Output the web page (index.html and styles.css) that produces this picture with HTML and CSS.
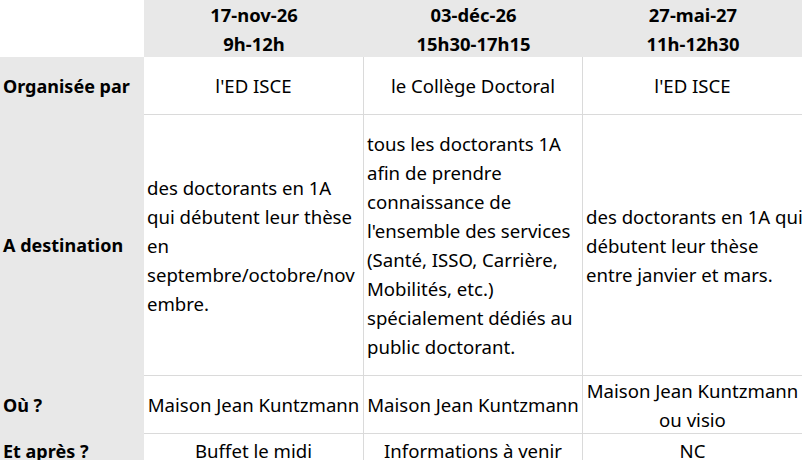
FILE: index.html
```html
<!DOCTYPE html>
<html lang="fr">
<head>
<meta charset="utf-8">
<title>Sessions</title>
<link rel="stylesheet" href="styles.css">
</head>
<body>
<div class="sheet">
  <div class="corner"></div>
  <div class="head">17-nov-26<br>9h-12h</div>
  <div class="head">03-déc-26<br>15h30-17h15</div>
  <div class="head">27-mai-27<br>11h-12h30</div>

  <div class="label">Organisée par</div>
  <div class="cell center">l'ED ISCE</div>
  <div class="cell center">le Collège Doctoral</div>
  <div class="cell center">l'ED ISCE</div>

  <div class="label">A destination</div>
  <div class="cell left">des doctorants en 1A<br>qui débutent leur thèse<br>en<br>septembre/octobre/nov<br>embre.</div>
  <div class="cell left">tous les doctorants 1A<br>afin de prendre<br>connaissance de<br>l'ensemble des services<br>(Santé, ISSO, Carrière,<br>Mobilités, etc.)<br>spécialement dédiés au<br>public doctorant.</div>
  <div class="cell left">des doctorants en 1A qui<br>débutent leur thèse<br>entre janvier et mars.</div>

  <div class="label">Où ?</div>
  <div class="cell center">Maison Jean Kuntzmann</div>
  <div class="cell center">Maison Jean Kuntzmann</div>
  <div class="cell center">Maison Jean Kuntzmann<br>ou visio</div>

  <div class="label">Et après ?</div>
  <div class="cell center">Buffet le midi</div>
  <div class="cell center">Informations à venir</div>
  <div class="cell center">NC</div>
</div>
</body>
</html>
```

FILE: styles.css
```css
html, body {
  margin: 0;
  padding: 0;
  background: #ffffff;
  overflow: hidden;
}

body {
  width: 802px;
  height: 460px;
  font-family: "Noto Sans", "Liberation Sans", sans-serif;
  font-size: 18.6px;
  line-height: 29px;
  color: #000000;
}

.sheet {
  display: grid;
  grid-template-columns: 144px 220px 219px 220px;
  grid-template-rows: 57px 58px 261px 58px 34px;
}

.corner {
  background: #ffffff;
}

.head {
  background: #e8e8e8;
  font-weight: 700;
  font-size: 18.4px;
  text-align: center;
  display: flex;
  flex-direction: column;
  justify-content: center;
  white-space: nowrap;
}

.label {
  background: #e8e8e8;
  font-weight: 700;
  font-size: 18px;
  padding-left: 3px;
  display: flex;
  align-items: center;
  white-space: nowrap;
}

.cell {
  box-sizing: border-box;
  border-right: 1px solid #dadada;
  border-bottom: 1px solid #dadada;
  display: flex;
  flex-direction: column;
  justify-content: center;
  white-space: nowrap;
  min-width: 0;
}

.center {
  text-align: center;
  align-items: center;
}

.left {
  text-align: left;
  padding-left: 3px;
}
```
